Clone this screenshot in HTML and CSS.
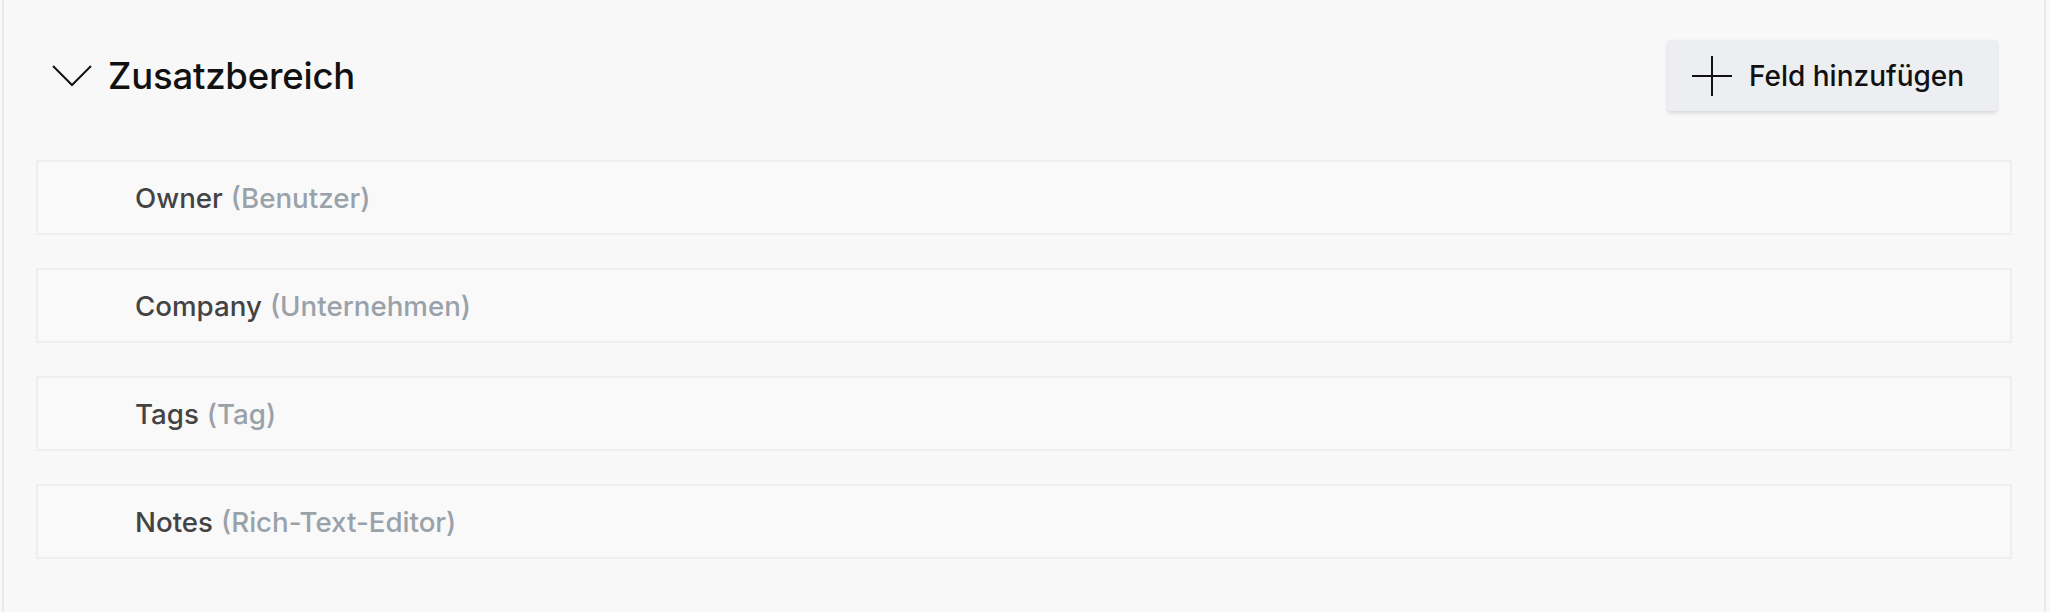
FILE: index.html
```html
<!DOCTYPE html>
<html lang="de">
<head>
<meta charset="utf-8">
<title>Zusatzbereich</title>
<link rel="stylesheet" href="styles.css">
</head>
<body>
<section class="panel">
  <header class="panel-head">
    <div class="head-title">
      <svg class="chevron" width="40" height="22" viewBox="0 0 40 22" aria-hidden="true">
        <path d="M1 1 L20 20 L39 1" fill="none" stroke="#111" stroke-width="2"/>
      </svg>
      <h2 class="title">Zusatzbereich</h2>
    </div>
    <button class="add-btn" type="button">
      <svg class="plus" width="40" height="40" viewBox="0 0 40 40" aria-hidden="true">
        <path d="M20 0 V40 M0 20 H40" fill="none" stroke="#111" stroke-width="2"/>
      </svg>
      <span>Feld hinzufügen</span>
    </button>
  </header>
  <ul class="fields">
    <li class="field"><span class="name">Owner</span> <span class="type">(Benutzer)</span></li>
    <li class="field"><span class="name">Company</span> <span class="type">(Unternehmen)</span></li>
    <li class="field"><span class="name">Tags</span> <span class="type">(Tag)</span></li>
    <li class="field"><span class="name">Notes</span> <span class="type">(Rich-Text-Editor)</span></li>
  </ul>
</section>
</body>
</html>
```

FILE: styles.css
```css
html, body {
  margin: 0;
  padding: 0;
  background: #f9f9f9;
  height: 612px;
  overflow: hidden;
}

body {
  font-family: "Inter", "Liberation Sans", sans-serif;
  color: #111;
}

.panel {
  margin: 0 4px 0 2px;
  border-left: 2px solid #e9e9e9;
  border-right: 2px solid #e9e9e9;
  background: #f8f8f8;
  padding: 40px 32px 80px;
}

.panel-head {
  display: flex;
  align-items: center;
  justify-content: space-between;
  height: 71px;
  padding: 0 15px 0 16px;
  margin-bottom: 49px;
}

.head-title {
  display: flex;
  align-items: center;
  gap: 16px;
}

.chevron {
  display: block;
  margin-top: 1px;
}

.title {
  margin: 0;
  font-size: 36.5px;
  font-weight: 500;
  letter-spacing: -0.2px;
  color: #111;
}

.add-btn {
  display: flex;
  align-items: center;
  gap: 17px;
  height: 71px;
  width: 329px;
  padding: 0 24px;
  border: none;
  border-radius: 2px;
  background: #eceef1;
  box-shadow: 0 2px 4px rgba(0, 0, 0, 0.14);
  font-family: inherit;
  font-size: 28px;
  font-weight: 500;
  color: #111;
}

.plus {
  display: block;
  flex: none;
}

.fields {
  list-style: none;
  margin: 0;
  padding: 0;
  display: flex;
  flex-direction: column;
  gap: 33px;
}

.field {
  height: 75px;
  box-sizing: border-box;
  border: 2px solid #efefef;
  background: #f9f9f9;
  display: flex;
  align-items: center;
  gap: 8px;
  padding-left: 97px;
  font-size: 27.7px;
  font-weight: 500;
}

.name {
  color: #434343;
}

.type {
  color: #9aa2a9;
}
```
